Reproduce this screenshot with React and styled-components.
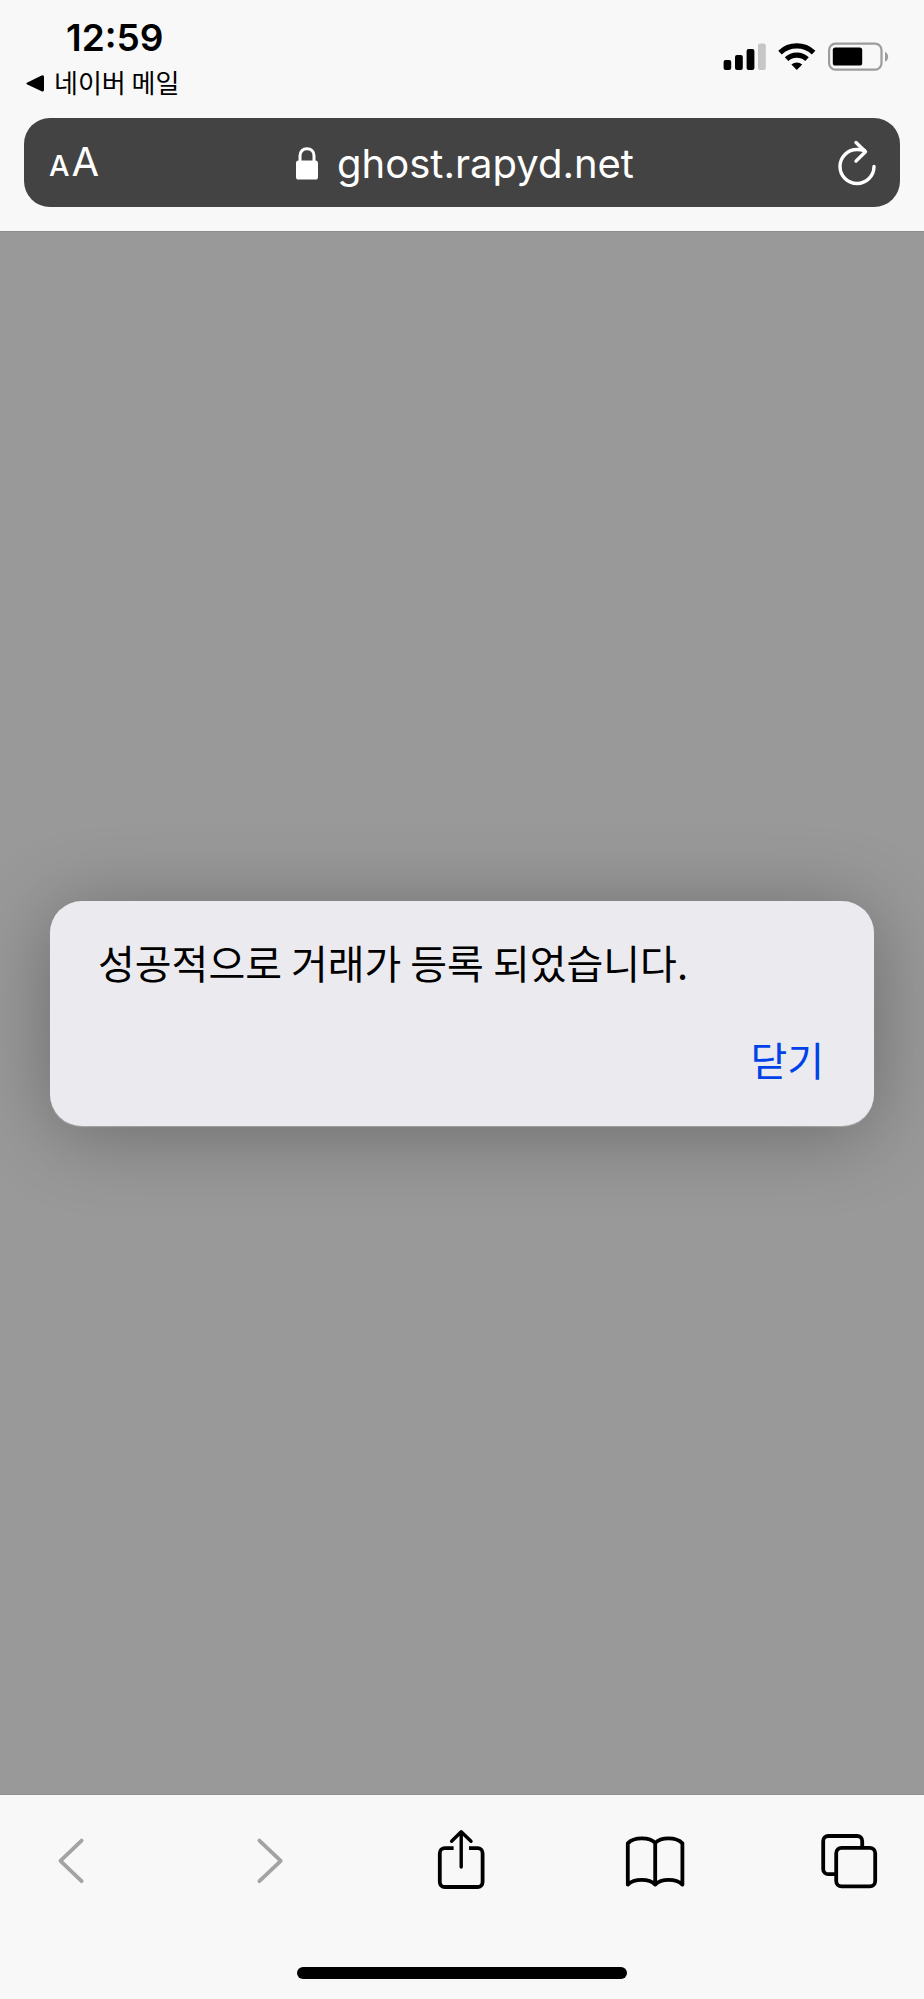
import React from 'react';
import styled, { createGlobalStyle } from 'styled-components';

const GlobalStyle = createGlobalStyle`
  *, *::before, *::after {
    box-sizing: border-box;
  }
  body {
    margin: 0;
    background: #f8f8f8;
    color: #000;
    font-family: Inter, 'Noto Sans CJK KR', sans-serif;
  }
  button {
    display: flex;
    align-items: center;
    padding: 0;
    border: none;
    background: none;
    color: inherit;
    font: inherit;
  }
  svg {
    display: block;
  }
`;

const Screen = styled.div`
  display: flex;
  flex-direction: column;
  min-height: 100vh;
`;

const Header = styled.header`
  padding: 20px 24px 24px;
`;

const StatusBar = styled.div`
  display: flex;
  justify-content: space-between;
  padding-right: 10px;
  margin-bottom: 20px;
`;

const StatusLeft = styled.div`
  display: flex;
  flex-direction: column;
  gap: 10px;
`;

const Time = styled.time`
  padding-left: 42px;
  font-size: 37px;
  font-weight: 600;
  line-height: 36px;
`;

const BackToApp = styled.button`
  && {
    gap: 8px;
    font-family: 'Noto Sans CJK KR', sans-serif;
    font-size: 26px;
    line-height: 32px;
  }
`;

const StatusIcons = styled.div`
  padding-top: 20px;
`;

const AddressBar = styled.div`
  display: grid;
  grid-template-columns: 1fr auto 1fr;
  align-items: center;
  height: 89px;
  padding: 2px 22px 0 25px;
  border-radius: 26px;
  background: #434343;
  color: #fff;
`;

const TextSize = styled.button`
  && {
    align-items: baseline;
    gap: 2px;
    font-size: 40px;
    line-height: 44px;
  }
`;

const SmallLetter = styled.span`
  font-size: 29px;
  font-weight: 500;
`;

const Address = styled.div`
  display: flex;
  align-items: center;
  gap: 18px;
  padding-left: 2px;
  font-size: 40px;
  line-height: 44px;
`;

const Reload = styled.button`
  justify-self: end;
`;

const Page = styled.main`
  display: flex;
  flex: 1;
  align-items: center;
  padding: 0 50px;
  border-top: 1px solid #8c8c8c;
  border-bottom: 1px solid #909090;
  background: #999;
`;

const Alert = styled.div`
  display: flex;
  flex: 1;
  flex-direction: column;
  gap: 43px;
  padding: 34px 50px 40px 48px;
  border-radius: 32px;
  background: #ebeaef;
  box-shadow: 0 8px 80px rgba(0, 0, 0, 0.3), 0 1px 1px rgba(255, 255, 255, 0.4);
  font-family: 'Noto Sans CJK KR', sans-serif;
  font-size: 40px;
  line-height: 54px;
`;

const Message = styled.p`
  margin: 0;
`;

const CloseButton = styled.button`
  && {
    align-self: flex-end;
    color: #0042e8;
  }
`;

const Footer = styled.footer`
  padding-top: 32px;
  padding-bottom: 20px;
`;

const Toolbar = styled.nav`
  display: flex;
  justify-content: space-between;
  padding: 0 45px 0 41px;
  margin-bottom: 74px;
`;

const ToolButton = styled.button`
  && {
    color: ${(props) => (props.disabled ? '#a3a3a3' : '#000')};
  }
`;

const HomeIndicator = styled.div`
  width: 330px;
  height: 12px;
  margin: 0 auto;
  border-radius: 6px;
  background: #000;
`;

const ToolIcon = ({ children }) => (
  <svg
    width="60"
    height="66"
    viewBox="0 0 60 66"
    fill="none"
    stroke="currentColor"
    strokeWidth="3.8"
    strokeLinecap="round"
    strokeLinejoin="round"
    aria-hidden="true"
  >
    {children}
  </svg>
);

const PhoneStatus = () => (
  <svg width="170" height="32" viewBox="0 0 170 32" role="img" aria-label="Signal, Wi-Fi, battery">
    <rect x="3.6" y="20" width="7.6" height="10" rx="2" />
    <rect x="15" y="15" width="7.8" height="15" rx="2" />
    <rect x="26.6" y="9" width="7.8" height="21" rx="2" />
    <rect x="38" y="3.4" width="7.8" height="26.6" rx="2" fill="#c6c6c6" />
    <g fill="none" stroke="#000" strokeWidth="5.2">
      <path d="M60 12.6a24.5 24.5 0 0 1 33.6 0" />
      <path d="M66.6 19.2a15 15 0 0 1 20.4 0" />
    </g>
    <path d="M76.8 30l-5.4-5.4a8 8 0 0 1 10.8 0z" />
    <rect x="109.1" y="3.6" width="52.4" height="26" rx="6.4" fill="none" stroke="#9c9c9c" strokeWidth="2.2" />
    <rect x="112.8" y="7.6" width="29.4" height="18" rx="2.6" />
    <path d="M165 11.8c4.2 2 4.2 8.2 0 10z" fill="#9c9c9c" />
  </svg>
);

export default function App() {
  return (
    <Screen>
      <GlobalStyle />
      <Header>
        <StatusBar>
          <StatusLeft>
            <Time>12:59</Time>
            <BackToApp type="button">
              <svg width="22" height="24" viewBox="0 0 22 24" aria-hidden="true">
                <path d="M3.4 12.4L17.600 5.600Q20 4.600 20 7V19.800Q20 22.200 17.600 21.200L3.400 14.400Q1.400 13.400 3.400 12.400z" />
              </svg>
              네이버 메일
            </BackToApp>
          </StatusLeft>
          <StatusIcons>
            <PhoneStatus />
          </StatusIcons>
        </StatusBar>
        <AddressBar>
          <TextSize type="button">
            <SmallLetter>A</SmallLetter>A
          </TextSize>
          <Address>
            <svg width="24" height="34" viewBox="0 0 24 34" aria-hidden="true">
              <rect x="1" y="13.6" width="22" height="19" rx="2.6" fill="#fff" />
              <path d="M5 15.5V8.800C5 4.200 8 1.800 12 1.800s7 2.400 7 7v6.700" fill="none" stroke="#fff" strokeWidth="3" />
            </svg>
            <span>ghost.rapyd.net</span>
          </Address>
          <Reload type="button" aria-label="Reload">
            <svg
              width="40"
              height="48"
              viewBox="0 0 40 48"
              fill="none"
              stroke="#fff"
              strokeWidth="3.4"
              strokeLinecap="round"
              strokeLinejoin="round"
              aria-hidden="true"
            >
              <path d="M36 26.500A17 17 0 1 1 19 9.500q4 0 7.500 1" />
              <path d="M18 2.500l9.500 9.200L18 21.100" />
            </svg>
          </Reload>
        </AddressBar>
      </Header>

      <Page>
        <Alert role="alertdialog" aria-labelledby="alert-message">
          <Message id="alert-message">성공적으로 거래가 등록 되었습니다.</Message>
          <CloseButton type="button">닫기</CloseButton>
        </Alert>
      </Page>

      <Footer>
        <Toolbar>
          <ToolButton type="button" aria-label="Back" disabled>
            <ToolIcon>
              <path d="M40.6 13.6L19.4 33.8l21.2 20.4" />
            </ToolIcon>
          </ToolButton>
          <ToolButton type="button" aria-label="Forward" disabled>
            <ToolIcon>
              <path d="M23.4 13.6l21.4 20.2-21.4 20.4" />
            </ToolIcon>
          </ToolButton>
          <ToolButton type="button" aria-label="Share">
            <ToolIcon>
              <path d="M23.6 21.2H14.8a5 5 0 0 0-5 5V55a5 5 0 0 0 5 5h32.8a5 5 0 0 0 5-5V26.2a5 5 0 0 0-5-5h-8.6" strokeLinecap="butt" />
              <path d="M31.2 40V5M21.6 14.2L31.2 4.8l9.8 9.4" strokeWidth="3.4" />
            </ToolIcon>
          </ToolButton>
          <ToolButton type="button" aria-label="Bookmarks">
            <ToolIcon>
              <path d="M30.2 16C24.800 10 9 9.800 2.800 16.400V57.600C9.200 51.400 24.300 51.400 30.200 57.600C36.300 51.400 51 51.400 57.400 57.600V16.400C51.200 9.800 35.800 10 30.200 16V57.600" />
            </ToolIcon>
          </ToolButton>
          <ToolButton type="button" aria-label="Tabs">
            <ToolIcon>
              <path d="M16 47.2H9.2a5 5 0 0 1-5-5V14a5 5 0 0 1 5-5h29a5 5 0 0 1 5 5v6" strokeLinecap="butt" />
              <rect x="17.2" y="20.8" width="39" height="38.6" rx="5.4" />
            </ToolIcon>
          </ToolButton>
        </Toolbar>
        <HomeIndicator />
      </Footer>
    </Screen>
  );
}
